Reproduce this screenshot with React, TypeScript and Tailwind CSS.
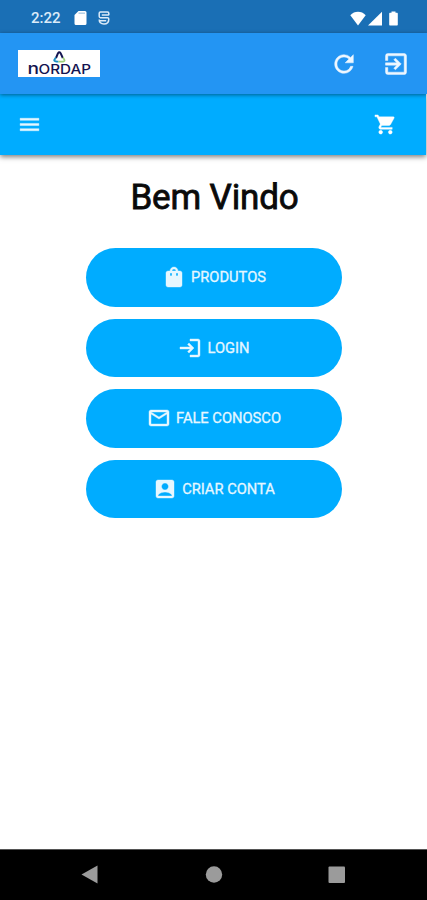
import type { IconType } from 'react-icons';
import {
  MdAccountBox,
  MdExitToApp,
  MdLogin,
  MdMenu,
  MdOutlineEmail,
  MdRefresh,
  MdShoppingBag,
  MdShoppingCart,
} from 'react-icons/md';

interface MenuItem {
  label: string;
  icon: IconType;
}

const menuItems: MenuItem[] = [
  { label: 'Produtos', icon: MdShoppingBag },
  { label: 'Login', icon: MdLogin },
  { label: 'Fale Conosco', icon: MdOutlineEmail },
  { label: 'Criar Conta', icon: MdAccountBox },
];

// slightly heavier icons; the empty 24x24 bounding path must stay unstroked
const iconClass = 'stroke-[0.4] [&>path[fill=none]]:stroke-none';

function StatusBar() {
  return (
    <div className="flex h-[33px] shrink-0 items-center bg-[#1a6fb5] pt-[3px] pr-[29px] pl-[31px] text-white">
      <span className="text-[15px] leading-none font-medium text-[#dcebf8]">2:22</span>
      <svg className="ml-[13px] h-[14px] w-[13px]" viewBox="0 0 13 14">
        <path d="M4.5 0H11a1.5 1.5 0 0 1 1.5 1.5v11A1.5 1.5 0 0 1 11 14H2a1.5 1.5 0 0 1-1.500-1.500V4z" fill="#fff" />
        <path d="M4.500 2.200h6.500" stroke="#1a6fb5" strokeWidth="1.400" opacity="0.350" />
      </svg>
      <svg className="ml-[11px] h-[14px] w-[12px]" viewBox="0 0 12 14" fill="none" stroke="#dcebf8" strokeWidth="1.500">
        <path d="M10.800 4.300V2.200Q10.800 1 9.600 1H2.400Q1.200 1 1.200 2.200V5.300Q1.200 6.700 2.400 6.700H9.600Q10.800 6.700 10.800 8C10.800 11 8.800 13 6 13S1.200 11.300 1.200 8.600" />
        <path d="M3.800 3.900H10.800M1.200 9.700H8.200" />
      </svg>
      <svg className="ml-auto h-[15px] w-[48px]" viewBox="0 0 48 15" fill="#fff">
        <path d="M8 14.500.3 4.200C4.400-.3 11.600-.3 15.700 4.200z" />
        <path d="M32 .8v13.700H18z" />
        <path d="M41.500.5h4v1.300h1.300c.6 0 1 .4 1 1v10.700c0 .6-.4 1-1 1h-6.600c-.6 0-1-.4-1-1V2.800c0-.6.4-1 1-1h1.300z" />
      </svg>
    </div>
  );
}

function Logo() {
  return (
    <svg className="h-[27px] w-[82px] bg-white" viewBox="0 0 82 27">
      <path d="M38 8 40 3.200Q41.300 1.200 42.600 3.200L44.800 8" fill="none" stroke="#141450" strokeWidth="2" />
      <path d="M37.800 7.500 36.200 10.200Q36.600 11.700 40.500 11.600" fill="none" stroke="#1d8fc4" strokeWidth="1.800" />
      <path d="M40.500 11.600H45Q47 11.300 46.400 9.800L45 7.600" fill="none" stroke="#9ccf7a" strokeWidth="1.800" />
      <g fill="#141450" className="font-['Inter'] text-[12.500px] font-medium">
        <text x="9.500" y="23.500" textLength="11.500" lengthAdjust="spacingAndGlyphs" className="text-[15.500px]">
          n
        </text>
        <text x="20.500" y="23.500" textLength="52.500" lengthAdjust="spacingAndGlyphs">
          ORDAP
        </text>
      </g>
    </svg>
  );
}

export default function App() {
  return (
    <div className="flex h-[900px] w-[427px] flex-col overflow-hidden bg-white font-['Roboto',sans-serif]">
      <StatusBar />

      <header className="relative z-20 flex h-[61px] shrink-0 items-center bg-[#2395f3] pr-[17px] pl-[18px] shadow-[0_1px_4px_rgba(0,0,0,0.45)]">
        <Logo />
        <button type="button" className="ml-auto text-[#eef7ff]">
          <MdRefresh size={28} className={iconClass} />
        </button>
        <button type="button" className="ml-[24px] text-[#eef7ff]">
          <MdExitToApp size={28} className={iconClass} />
        </button>
      </header>

      <nav className="relative z-10 mr-px flex h-[61px] shrink-0 items-center justify-between bg-[#00acff] pr-[29px] pl-[17px] shadow-[0_2px_5px_rgba(0,0,0,0.5)]">
        <button type="button" className="text-[#e6f7ff]">
          <MdMenu size={25} className={iconClass} />
        </button>
        <button type="button" className="text-white">
          <MdShoppingCart size={23} className={iconClass} />
        </button>
      </nav>

      <main className="flex flex-1 flex-col items-center">
        <h1 className="mt-[21px] ml-[2px] text-[35px] leading-[44px] font-normal tracking-[-0.150px] text-[#0a0a0a] [-webkit-text-stroke:0.8px_#0a0a0a]">
          Bem Vindo
        </h1>
        <div className="mt-[28px] flex w-[256px] flex-col gap-[12px]">
          {menuItems.map(({ label, icon: Icon }) => (
            <button
              key={label}
              type="button"
              className="flex h-[58.500px] items-center justify-center gap-[5px] rounded-full bg-[#00acff] pl-px text-[14.700px] text-[#e6f7ff] uppercase"
            >
              <Icon size={24} className={iconClass} />
              <span className="font-normal [-webkit-text-stroke:0.3px_#e6f7ff]">{label}</span>
            </button>
          ))}
        </div>
      </main>

      <div className="h-[51px] shrink-0 border-t border-[#555] bg-black">
        <svg className="h-[50px] w-[427px]" viewBox="0 0 427 50" fill="#9b9b9b">
          <path d="M81.500 24.500 97.500 15.500V33.500z" />
          <circle cx="214" cy="24.500" r="8.200" />
          <rect x="328.500" y="16.500" width="16.500" height="16.500" rx="1" />
        </svg>
      </div>
    </div>
  );
}
